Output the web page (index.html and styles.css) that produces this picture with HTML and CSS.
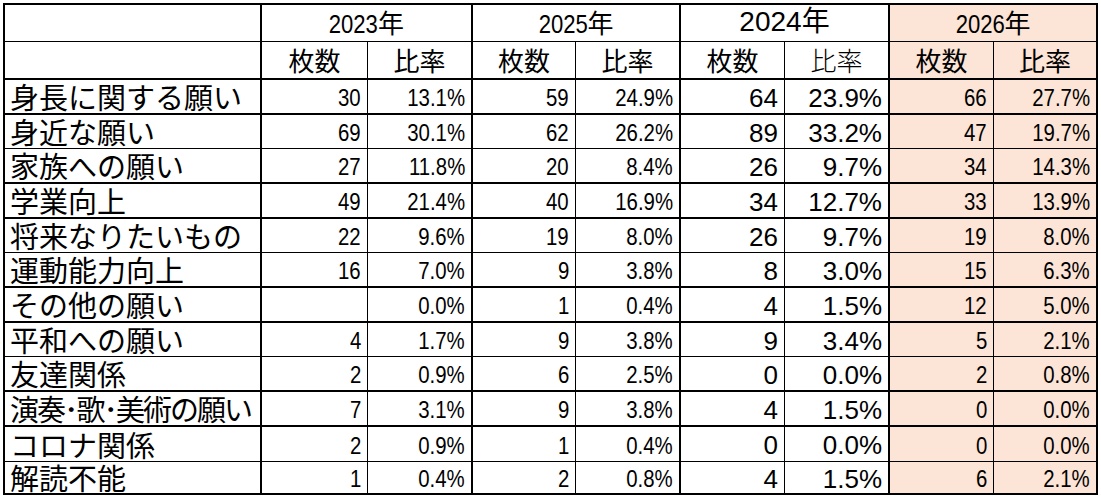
FILE: index.html
```html
<!DOCTYPE html>
<html lang="ja">
<head>
<meta charset="utf-8">
<title>願いの分類</title>
<link rel="stylesheet" href="styles.css">
</head>
<body>
<div class="sheet">
  <div class="row thin">
    <div class="cell edge"></div>
    <div class="cell edge span2 yr"><span class="nd">2023</span>年</div>
    <div class="cell edge span2 yr"><span class="nd">2025</span>年</div>
    <div class="cell edge span2 yr wide">2024年</div>
    <div class="cell edge span2 yr hi"><span class="nd">2026</span>年</div>
  </div>
  <div class="row">
    <div class="cell edge"></div>
    <div class="cell hd">枚数</div><div class="cell edge hd">比率</div>
    <div class="cell hd">枚数</div><div class="cell edge hd">比率</div>
    <div class="cell hd">枚数</div><div class="cell edge hd light">比率</div>
    <div class="cell hd hi">枚数</div><div class="cell edge hd hi">比率</div>
  </div>

  <div class="row">
    <div class="cell edge lab">身長に関する願い</div>
    <div class="cell num"><span class="n">30</span></div><div class="cell edge num"><span class="n">13.1%</span></div>
    <div class="cell num"><span class="n">59</span></div><div class="cell edge num"><span class="n">24.9%</span></div>
    <div class="cell num wide">64</div><div class="cell edge num wide">23.9%</div>
    <div class="cell num hi"><span class="n">66</span></div><div class="cell edge num hi"><span class="n">27.7%</span></div>
  </div>
  <div class="row thin">
    <div class="cell edge lab">身近な願い</div>
    <div class="cell num"><span class="n">69</span></div><div class="cell edge num"><span class="n">30.1%</span></div>
    <div class="cell num"><span class="n">62</span></div><div class="cell edge num"><span class="n">26.2%</span></div>
    <div class="cell num wide">89</div><div class="cell edge num wide">33.2%</div>
    <div class="cell num hi"><span class="n">47</span></div><div class="cell edge num hi"><span class="n">19.7%</span></div>
  </div>
  <div class="row">
    <div class="cell edge lab">家族への願い</div>
    <div class="cell num"><span class="n">27</span></div><div class="cell edge num"><span class="n">11.8%</span></div>
    <div class="cell num"><span class="n">20</span></div><div class="cell edge num"><span class="n">8.4%</span></div>
    <div class="cell num wide">26</div><div class="cell edge num wide">9.7%</div>
    <div class="cell num hi"><span class="n">34</span></div><div class="cell edge num hi"><span class="n">14.3%</span></div>
  </div>
  <div class="row">
    <div class="cell edge lab">学業向上</div>
    <div class="cell num"><span class="n">49</span></div><div class="cell edge num"><span class="n">21.4%</span></div>
    <div class="cell num"><span class="n">40</span></div><div class="cell edge num"><span class="n">16.9%</span></div>
    <div class="cell num wide">34</div><div class="cell edge num wide">12.7%</div>
    <div class="cell num hi"><span class="n">33</span></div><div class="cell edge num hi"><span class="n">13.9%</span></div>
  </div>
  <div class="row thin">
    <div class="cell edge lab">将来なりたいもの</div>
    <div class="cell num"><span class="n">22</span></div><div class="cell edge num"><span class="n">9.6%</span></div>
    <div class="cell num"><span class="n">19</span></div><div class="cell edge num"><span class="n">8.0%</span></div>
    <div class="cell num wide">26</div><div class="cell edge num wide">9.7%</div>
    <div class="cell num hi"><span class="n">19</span></div><div class="cell edge num hi"><span class="n">8.0%</span></div>
  </div>
  <div class="row">
    <div class="cell edge lab">運動能力向上</div>
    <div class="cell num"><span class="n">16</span></div><div class="cell edge num"><span class="n">7.0%</span></div>
    <div class="cell num"><span class="n">9</span></div><div class="cell edge num"><span class="n">3.8%</span></div>
    <div class="cell num wide">8</div><div class="cell edge num wide">3.0%</div>
    <div class="cell num hi"><span class="n">15</span></div><div class="cell edge num hi"><span class="n">6.3%</span></div>
  </div>
  <div class="row">
    <div class="cell edge lab">その他の願い</div>
    <div class="cell num"></div><div class="cell edge num"><span class="n">0.0%</span></div>
    <div class="cell num"><span class="n">1</span></div><div class="cell edge num"><span class="n">0.4%</span></div>
    <div class="cell num wide">4</div><div class="cell edge num wide">1.5%</div>
    <div class="cell num hi"><span class="n">12</span></div><div class="cell edge num hi"><span class="n">5.0%</span></div>
  </div>
  <div class="row thin">
    <div class="cell edge lab">平和への願い</div>
    <div class="cell num"><span class="n">4</span></div><div class="cell edge num"><span class="n">1.7%</span></div>
    <div class="cell num"><span class="n">9</span></div><div class="cell edge num"><span class="n">3.8%</span></div>
    <div class="cell num wide">9</div><div class="cell edge num wide">3.4%</div>
    <div class="cell num hi"><span class="n">5</span></div><div class="cell edge num hi"><span class="n">2.1%</span></div>
  </div>
  <div class="row">
    <div class="cell edge lab">友達関係</div>
    <div class="cell num"><span class="n">2</span></div><div class="cell edge num"><span class="n">0.9%</span></div>
    <div class="cell num"><span class="n">6</span></div><div class="cell edge num"><span class="n">2.5%</span></div>
    <div class="cell num wide">0</div><div class="cell edge num wide">0.0%</div>
    <div class="cell num hi"><span class="n">2</span></div><div class="cell edge num hi"><span class="n">0.8%</span></div>
  </div>
  <div class="row">
    <div class="cell edge lab long">演奏･歌･美術の願い</div>
    <div class="cell num"><span class="n">7</span></div><div class="cell edge num"><span class="n">3.1%</span></div>
    <div class="cell num"><span class="n">9</span></div><div class="cell edge num"><span class="n">3.8%</span></div>
    <div class="cell num wide">4</div><div class="cell edge num wide">1.5%</div>
    <div class="cell num hi"><span class="n">0</span></div><div class="cell edge num hi"><span class="n">0.0%</span></div>
  </div>
  <div class="row thin">
    <div class="cell edge lab">コロナ関係</div>
    <div class="cell num"><span class="n">2</span></div><div class="cell edge num"><span class="n">0.9%</span></div>
    <div class="cell num"><span class="n">1</span></div><div class="cell edge num"><span class="n">0.4%</span></div>
    <div class="cell num wide">0</div><div class="cell edge num wide">0.0%</div>
    <div class="cell num hi"><span class="n">0</span></div><div class="cell edge num hi"><span class="n">0.0%</span></div>
  </div>
  <div class="row">
    <div class="cell edge lab">解読不能</div>
    <div class="cell num"><span class="n">1</span></div><div class="cell edge num"><span class="n">0.4%</span></div>
    <div class="cell num"><span class="n">2</span></div><div class="cell edge num"><span class="n">0.8%</span></div>
    <div class="cell num wide">4</div><div class="cell edge num wide">1.5%</div>
    <div class="cell num hi"><span class="n">6</span></div><div class="cell edge num hi"><span class="n">2.1%</span></div>
  </div>
</div>
</body>
</html>
```

FILE: styles.css
```css
* {
  box-sizing: border-box;
}

html, body {
  margin: 0;
  padding: 0;
  background: #ffffff;
}

.sheet {
  display: grid;
  grid-template-columns: 257px 106px 105px 103px 105px 104px 105px 104px 104px;
  grid-template-rows: 37px 38px 35px 34px 35px 35px 34px 35px 35px 34px 35px 35px 35px 33px;
  width: max-content;
  margin: 3px 0 0 3px;
  border-top: 2px solid #000;
  border-left: 2px solid #000;
  color: #000;
  font-family: "Liberation Sans", Arial, sans-serif;
}

.row {
  display: contents;
}

.cell {
  display: flex;
  align-items: center;
  white-space: nowrap;
  border-right: 1px solid #000;
  border-bottom: 2px solid #000;
  line-height: 1;
}

.row.thin > .cell {
  border-bottom-width: 1px;
}

.cell.edge {
  border-right-width: 2px;
}

.hi {
  background: #fce4d6;
}

.span2 {
  grid-column: span 2;
}

.yr {
  justify-content: center;
  font-family: "Liberation Sans", "Noto Sans CJK JP", sans-serif;
  font-size: 26px;
  padding-top: 1px;
}

.yr .nd {
  display: inline-block;
  transform: scaleX(0.85);
  transform-origin: right center;
  margin-left: -9px;
}

.yr.wide {
  font-size: 28px;
  padding-top: 0;
  padding-bottom: 3px;
}

.hd {
  justify-content: center;
  font-family: "Noto Sans CJK JP", sans-serif;
  font-size: 26px;
}

.hd.light {
  font-weight: 300;
}

.lab {
  padding-left: 5px;
  font-family: "Noto Sans CJK JP", sans-serif;
  font-size: 29px;
}

.lab.long {
  letter-spacing: -2px;
}

.num {
  justify-content: flex-end;
  padding-right: 6px;
  padding-top: 3px;
  font-size: 24px;
}

.num .n {
  display: inline-block;
  transform: scaleX(0.85);
  transform-origin: right center;
}

.num.wide {
  font-size: 26px;
  padding-top: 2px;
}
```
